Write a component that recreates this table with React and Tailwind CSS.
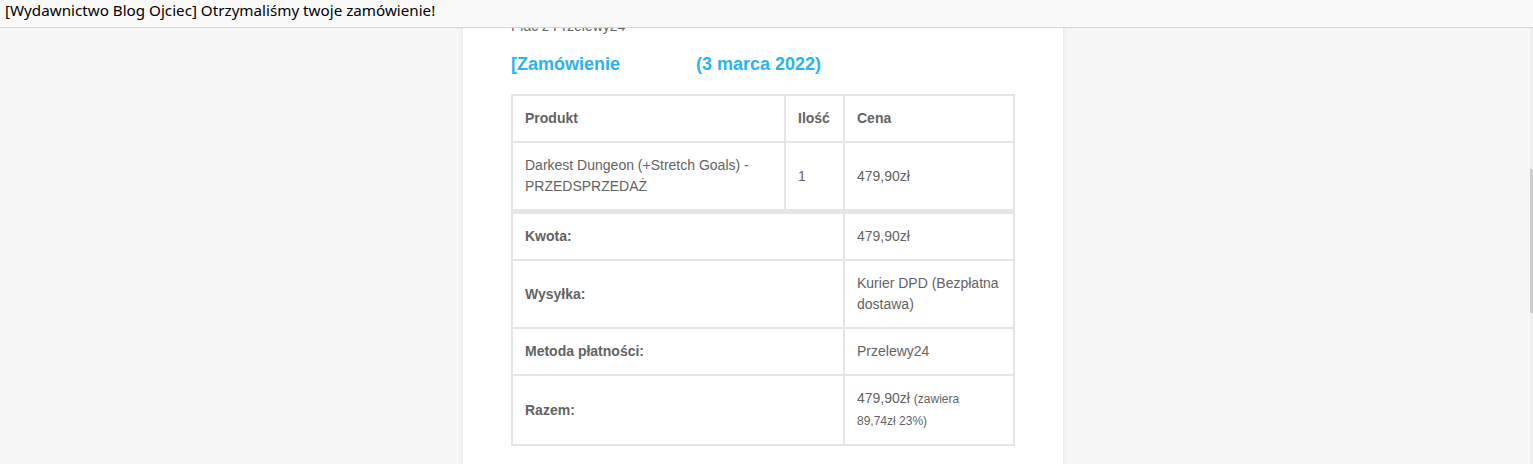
import React from 'react';

const cell = 'border border-[#e5e5e5] px-3 py-3 text-left align-middle';

export default function App() {
  return (
    <div className="h-[464px] overflow-hidden flex flex-col bg-[#f7f7f7] font-['Liberation_Sans',Arial,sans-serif]">
      <div className="h-[28px] shrink-0 bg-[#f9f9f9] border-b border-[#d6d6d6] px-[5px] text-[15.2px] leading-[20px] text-black font-['Noto_Sans',sans-serif]">
        [Wydawnictwo Blog Ojciec] Otrzymaliśmy twoje zamówienie!
      </div>

      <div className="flex-1 flex min-h-0">
        <div className="flex-1 flex justify-center items-start overflow-hidden pr-[4px]">
          <div className="w-[600px] -mt-[13px] bg-white px-12 pb-10 shadow-[0_0_6px_rgba(0,0,0,0.09)] text-[#636363] text-[14px] leading-[21px]">
            <p className="mb-4 pt-[1px]">Płać z Przelewy24</p>

            <h2 className="text-[18px] leading-[1.3] font-bold text-[#2bb3ee] mb-[18px]">
              [Zamówienie<span className="inline-block w-[71px]"></span> (3 marca 2022)
            </h2>

            <table className="w-full table-fixed border-separate border-spacing-0 border border-[#e5e5e5]">
              <colgroup>
                <col className="w-[273px]" />
                <col className="w-[59px]" />
                <col />
              </colgroup>
              <thead>
                <tr>
                  <th className={`${cell} font-bold`}>Produkt</th>
                  <th className={`${cell} font-bold`}>Ilość</th>
                  <th className={`${cell} font-bold`}>Cena</th>
                </tr>
              </thead>
              <tbody>
                <tr>
                  <td className={cell}>Darkest Dungeon (+Stretch Goals) - PRZEDSPRZEDAŻ</td>
                  <td className={cell}>1</td>
                  <td className={cell}>479,90zł</td>
                </tr>
              </tbody>
              <tfoot>
                <tr>
                  <th colSpan={2} className={`${cell} border-t-4 font-bold`}>Kwota:</th>
                  <td className={`${cell} border-t-4`}>479,90zł</td>
                </tr>
                <tr>
                  <th colSpan={2} className={`${cell} font-bold`}>Wysyłka:</th>
                  <td className={cell}>Kurier DPD (Bezpłatna dostawa)</td>
                </tr>
                <tr>
                  <th colSpan={2} className={`${cell} font-bold`}>Metoda płatności:</th>
                  <td className={cell}>Przelewy24</td>
                </tr>
                <tr>
                  <th colSpan={2} className={`${cell} font-bold`}>Razem:</th>
                  <td className={cell}>
                    479,90zł <small className="text-[12px] leading-[21px]">(zawiera 89,74zł 23%)</small>
                  </td>
                </tr>
              </tfoot>
            </table>
          </div>
        </div>

        <div className="w-[3px] shrink-0 bg-[#f0f0f0] pt-[141px]">
          <div className="h-[144px] bg-[#cdcdcd]"></div>
        </div>
      </div>
    </div>
  );
}
